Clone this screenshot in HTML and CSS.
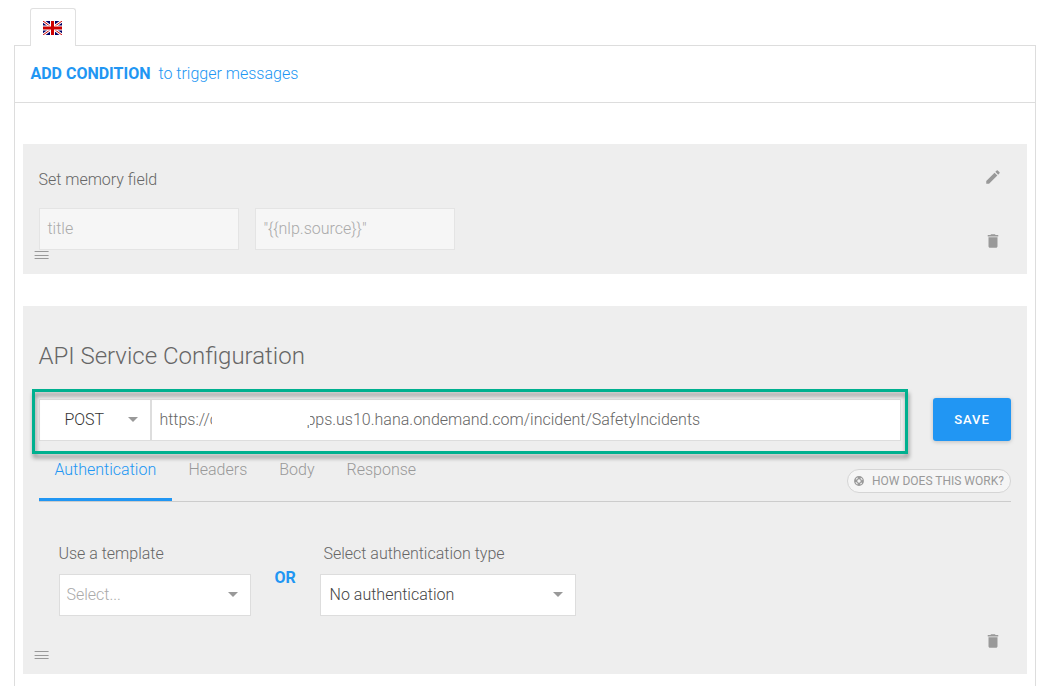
FILE: index.html
```html
<!DOCTYPE html>
<html lang="en">
<head>
<meta charset="utf-8">
<title>Bot actions</title>
<link rel="stylesheet" href="styles.css">
</head>
<body>
<div class="lang-tab">
  <svg width="19" height="14" viewBox="0 0 19 14">
    <path fill="#006" d="M0 0h19v14H0z"/>
    <path stroke="#fff" stroke-width="3" d="M0 0l19 14M19 0L0 14"/>
    <path stroke="#c00" stroke-width="1" d="M0 0l19 14M19 0L0 14"/>
    <path fill="#fff" d="M7 0h5v14H7zM0 4.500h19v5H0z"/>
    <path fill="#c00" d="M8 0h3v14H8zM0 5.500h19v3H0z"/>
  </svg>
</div>
<main class="panel">
  <div class="condition"><b>ADD CONDITION</b><span class="condition-text">to trigger messages</span></div>
  <section class="card memory">
    <div class="memory-title"><span>Set memory field</span></div>
    <div class="fields"><div class="field">title</div><div class="field">"{{nlp.source}}"</div></div>
    <svg class="icon edit" viewBox="0 0 24 24"><path d="M3 17.250V21h3.750L17.810 9.940l-3.750-3.750L3 17.250zM20.710 7.040a1 1 0 0 0 0-1.410l-2.340-2.340a1 1 0 0 0-1.410 0l-1.830 1.830 3.750 3.750 1.830-1.830z"/></svg>
    <svg class="icon trash" viewBox="0 0 24 24"><path d="M6 19c0 1.100.9 2 2 2h8c1.100 0 2-.9 2-2V7H6v12zM19 4h-3.500l-1-1h-5l-1 1H5v2h14V4z"/></svg>
    <svg class="drag" width="15" height="9"><path d="M.6 .5h14M.6 4.500h14M.6 7.500h14"/></svg>
  </section>
  <section class="card api">
    <h2>API Service Configuration</h2>
    <div class="request">
      <div class="method">POST<i class="caret"></i></div>
      <div class="url"><span class="url-start">https://c</span><span class="url-rest">pps.us10.hana.ondemand.com/incident/SafetyIncidents</span></div>
      <button class="save">SAVE</button>
      <div class="highlight"></div>
    </div>
    <div class="tabs">
      <span class="tab active">Authentication</span><span class="tab headers">Headers</span><span class="tab body">Body</span><span class="tab response">Response</span>
      <span class="help"><svg width="10" height="10" viewBox="0 0 10 10" fill="none"><circle cx="5" cy="5" r="3.300" stroke="#999" stroke-width="3.200"/><circle cx="5" cy="5" r="3.300" stroke="#f5f5f5" stroke-width="1" stroke-dasharray="2.600 2.584" stroke-dashoffset="1.300" transform="rotate(45 5 5)"/></svg>HOW DOES THIS WORK?</span>
    </div>
    <div class="auth">
      <div class="template"><label>Use a template</label><div class="select empty">Select...<i class="caret"></i></div></div>
      <b class="or">OR</b>
      <div class="type"><label>Select authentication type</label><div class="select">No authentication<i class="caret"></i></div></div>
    </div>
    <svg class="icon trash" viewBox="0 0 24 24"><path d="M6 19c0 1.100.9 2 2 2h8c1.100 0 2-.9 2-2V7H6v12zM19 4h-3.500l-1-1h-5l-1 1H5v2h14V4z"/></svg>
    <svg class="drag" width="15" height="9"><path d="M.6 .5h14M.6 4.500h14M.6 7.500h14"/></svg>
  </section>
</main>
</body>
</html>
```
FILE: styles.css
```css
* { box-sizing: border-box; }
body {
  margin: 0;
  padding: 8px 22px 0 14px;
  height: 686px;
  overflow: hidden;
  background: #fff;
  font: 300 16px/20px Roboto, sans-serif;
  color: #666;
}
.lang-tab {
  position: relative;
  z-index: 1;
  width: 46px;
  height: 38px;
  margin: 0 0 -1px 16px;
  padding: 12px 0 0 12px;
  border: 1px solid #e0e0e0;
  border-bottom: 0;
  border-radius: 3px 3px 0 0;
  background: #fff;
}
.lang-tab svg { display: block; }
.panel {
  height: 660px;
  border: 1px solid #ddd;
}
.condition {
  display: flex;
  align-items: center;
  height: 57px;
  padding: 0 0 1px 15.4px;
  border-bottom: 1px solid #ddd;
  color: #2196f3;
}
.condition b { font-weight: 700; }
.condition-text { margin-left: 8px; }
.card {
  position: relative;
  margin: 0 8px;
  padding: 0 16px;
  background: #eee;
}
.memory { height: 130px; margin-top: 41px; padding-top: 26px; }
.memory-title { height: 38px; margin-left: -.6px; }
.fields { display: flex; gap: 16px; }
.field {
  width: 200px;
  height: 42px;
  padding: 10px 7.4px;
  border: 1px solid #e4e4e4;
  background: #f6f6f6;
  color: #aaa;
}
.icon { position: absolute; width: 18px; height: 18px; right: 24.600px; fill: #999; }
.edit { top: 24px; }
.trash { bottom: 24px; }
.drag { position: absolute; left: 11px; bottom: 14px; stroke: #999; }
.api { height: 368px; margin-top: 32px; padding-top: 34px; }
h2 { margin: 0 0 0 -.6px; height: 58px; font: 300 24px/32px Roboto, sans-serif; }
.request { position: relative; display: flex; height: 43px; padding-top: 1px; }
.method, .url, .select { height: 42px; border: 1px solid #ddd; background: #fff; }
.method {
  display: flex;
  justify-content: space-between;
  align-items: center;
  width: 112px;
  padding: 0 12px 1px 24.4px;
  color: #333;
}
.caret {
  width: 0;
  height: 0;
  border: 5px solid transparent;
  border-top-color: #999;
  border-bottom: 0;
}
.url {
  display: flex;
  width: 750px;
  padding: 10px 7.4px;
}
.url-start { position: relative; width: 53px; white-space: nowrap; }
.url-start::after {
  content: "";
  position: absolute;
  left: 52.600px;
  top: 0;
  width: 20px;
  height: 20px;
  background: #fff;
}
.url-rest { position: relative; margin-left: 94px; white-space: nowrap; }
.url-rest::before {
  content: "";
  position: absolute;
  left: 0;
  top: 0;
  width: 4px;
  height: 15px;
  background: #fff;
}
.save {
  width: 78px;
  height: 43px;
  margin: -1px 0 0 32px;
  padding: 0;
  border: 0;
  border-radius: 3px;
  background: #2196f3;
  box-shadow: 0 1px 4px rgba(0, 0, 0, .2);
  color: #fff;
  font: 500 13px/43px Roboto, sans-serif;
  letter-spacing: 1px;
}
.highlight {
  position: absolute;
  left: -7px;
  top: -9px;
  width: 876px;
  height: 65px;
  border: 3px solid #00b08f;
  filter: drop-shadow(1px 4px 2px rgba(0, 0, 0, .4));
}
.tabs {
  display: flex;
  width: 972px;
  height: 61px;
  border-bottom: 1px solid #ccc;
  color: #999;
}
.tab { padding-top: 19px; }
.active { width: 133px; height: 60px; padding-left: 15.4px; border-bottom: 3px solid #2196f3; color: #2196f3; }
.headers { margin-left: 16.4px; }
.body { margin-left: 32px; }
.response { margin-left: 32px; }
.help {
  display: flex;
  align-items: center;
  gap: 8px;
  width: 164px;
  height: 24px;
  margin: 28px 0 0 auto;
  padding-left: 6px;
  border: 1px solid #d5d5d5;
  border-radius: 12px;
  background: #f5f5f5;
  font-size: 12px;
  font-weight: 400;
  white-space: nowrap;
}
.auth { display: flex; padding: 42px 0 0 20px; }
.template { width: 192px; }
.type { width: 256px; margin-left: 24px; }
label { display: block; height: 30px; margin-left: -.6px; }
.type label { padding-left: 4px; }
.select {
  display: flex;
  align-items: center;
  justify-content: space-between;
  padding: 0 12px 1px 8.6px;
  color: #444;
}
.empty { padding-left: 6.4px; color: #aaa; }
.or { width: 21.500px; margin: 24px 0 0 23.500px; font-weight: 700; color: #2196f3; }
```
